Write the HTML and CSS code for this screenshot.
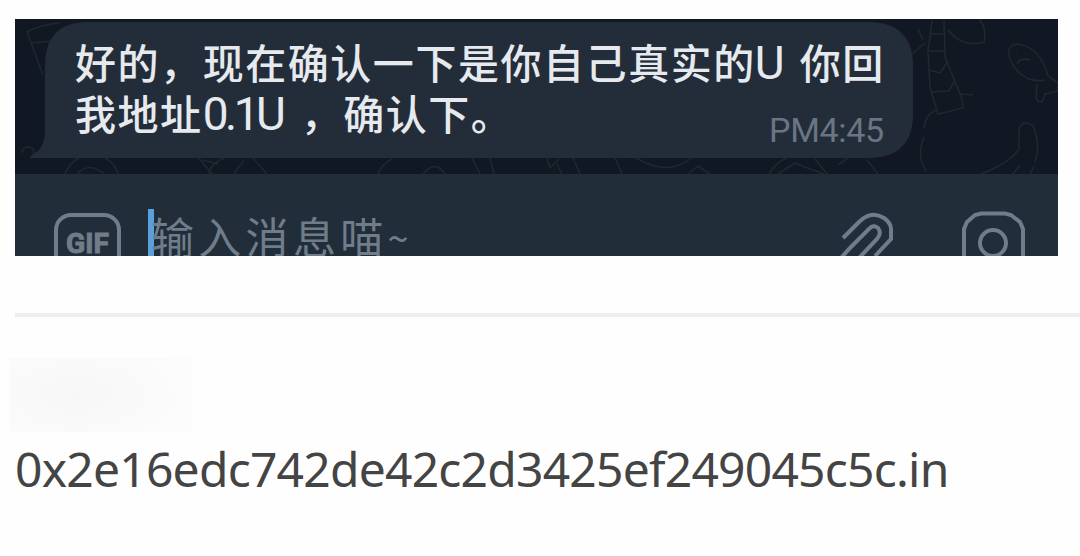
FILE: index.html
```
<!DOCTYPE html>
<html lang="zh-CN">
<head>
  <meta charset="UTF-8">
  <meta name="viewport" content="width=device-width, initial-scale=1.0">
  <title>Chat</title>
  <link rel="stylesheet" href="styles.css">
</head>
<body>
  <div class="chat">
    <div class="messages">
      <!-- wallpaper doodles and the bubble shape -->
      <svg class="wallpaper" width="1043" height="155" viewBox="15 19 1043 155">
        <g class="doodles">
          <path d="M43 75 L27 32 Q42 24 60 23 M31 43 L54 41 M22 153 a6 6 0 1 1 9 5"/>
          <path d="M65 174 Q70 162 79 158 M77 174 Q90 161 104 174 M105 158 Q116 164 118 174 M198 157 L212 174 M203 160 L218 164 M224 158 Q210 164 209 174 M234 174 L244 160 M253 158 L267 174"/>
          <path d="M378 174 Q382 164 392 159 M423 174 Q435 159 445 174 M472 158 L480 174 M490 158 L494 174 M547 158 L550 168 L559 159 M557 164 L562 174 M573 158 L580 174 M615 158 L622 174 M636 158 Q668 177 691 158 M688 174 L698 166 L710 174"/>
          <path d="M769 174 Q776 162 787 158 M778 174 L795 163 L805 167 L824 174 M815 159 L827 174 M838 165 L848 158 M867 160 L878 174"/>
          <path d="M932 21 L928 51 L930 87 L938 114 L963 108 L962 99 L945 57 L944 21 M931 34 H943 M929 51 H945 M929 70 L940 73 L948 61 M931 92 L949 91 L954 82 M961 94 L973 95 M912 54 L925 43 M918 29 L923 40 M948 30 Q962 48 984 42 Q987 30 980 20"/>
          <path d="M1045 80 Q1024 84 1011 62 Q1004 45 1018 44 Q1040 47 1048 76 L1058 83 L1058 91 L1045 94 Q1042 108 1036 98 L1037 84 M1017 64 Q1020 57 1030 60 M1016 51 h1"/>
          <path d="M936 110 Q925 115 924 128 M924 137 Q918 152 922 162 L926 172 M981 174 Q1010 163 1019 149 V130 Q1022 118 1033 126 Q1041 145 1035 162 M1013 174 L1020 165 M1030 174 L1034 166"/>
        </g>
        <path class="bubble" d="M88 22 H868 Q913 22 913 66 V114 Q913 158 868 158 H34 Q28 158 32 155 Q45 149 45 130 V66 Q45 22 88 22 Z"/>
      </svg>
      <div class="message">
        <p>好的，现在确认一下是你自己真实的<span class="unit">U</span>你回</p>
        <p>我地址<span class="amount">0.1U</span>，确认下。</p>
        <time>PM4:45</time>
      </div>
    </div>

    <div class="composer">
      <svg class="gif" width="70" height="60" viewBox="0 0 70 60">
        <rect x="2" y="2" width="63" height="64" rx="15"/>
        <text x="12" y="40" textLength="43" lengthAdjust="spacingAndGlyphs">GIF</text>
      </svg>
      <span class="cursor"></span>
      <span class="placeholder">输入消息喵<span class="tilde">~</span></span>
      <svg class="clip" width="58" height="50" viewBox="0 0 58 50">
        <path d="M3 26 L19 10 Q31 -2 44 6 Q51 11 51 17 V27 L35 44 M1 46 L10 36 L29 17 Q33 12 38 16 Q42 21 37 27 L19 46"/>
      </svg>
      <svg class="camera" width="66" height="50" viewBox="0 0 66 50">
        <path d="M3 60 V18 L6 11 L14 4 L20 2.5 H44 L50 4 L59 11 L62 18 V60"/>
        <circle cx="32" cy="32" r="13"/>
      </svg>
    </div>
  </div>

  <hr>

  <div class="hidden-name"></div>
  <p class="address">0x2e16edc742de42c2d3425ef249045c5c.in</p>
</body>
</html>
```

FILE: styles.css
```
body {
  margin: 0;
  padding-top: 19px;
  height: 537px;
  overflow: hidden;
  background-color: #fefefe;
  font-family: "Noto Sans", "Noto Sans CJK SC", sans-serif;
}

.chat {
  width: 1043px;
  height: 237px;
  margin-left: 15px;
  overflow: hidden;
  background-color: #222d3a;
}

.messages {
  position: relative;
  height: 155px;
  background-color: #111823;
}

.wallpaper {
  position: absolute;
  top: 0;
  left: 0;
}

.doodles {
  fill: none;
  stroke: #20272f;
  stroke-width: 1.6;
}

.bubble {
  fill: #232d39;
}

.message {
  position: relative;
  padding: 18px 0 0 60px;
  color: #e6eaee;
  font-family: "Noto Sans CJK SC", sans-serif;
  font-size: 41px;
  font-weight: 500;
  letter-spacing: 1.55px;
}

.message p {
  margin: 0;
  height: 51px;
  line-height: 49px;
  white-space: nowrap;
}

.unit,
.amount {
  display: inline-block;
  font-family: Roboto, sans-serif;
  font-size: 46px;
  font-weight: 400;
  line-height: 40px;
}

.unit {
  width: 44px;
  text-indent: -1px;
}

.amount {
  width: 98px;
  letter-spacing: -3.5px;
}

.message time {
  position: absolute;
  top: 91px;
  left: 754px;
  color: #697582;
  font-family: Roboto, sans-serif;
  font-size: 34px;
  font-weight: 400;
  line-height: 40px;
  letter-spacing: -0.3px;
}

.composer {
  display: flex;
  align-items: flex-start;
  height: 82px;
  color: #6f7c89;
}

.composer svg {
  flex: none;
  fill: none;
  stroke: #6f7c89;
  stroke-width: 4;
}

.gif {
  margin: 39px 0 0 39px;
}

.composer .gif text {
  fill: #6f7c89;
  stroke-width: 1;
  font: bold 28px Roboto, sans-serif;
}

.cursor {
  flex: none;
  width: 6px;
  height: 50px;
  margin: 35px 0 0 24px;
  background-color: #5b9fdb;
}

.placeholder {
  width: 685px;
  margin-top: 30px;
  margin-left: -3px;
  font-family: "Noto Sans CJK SC", sans-serif;
  font-size: 43px;
  font-weight: 400;
  line-height: 62px;
  letter-spacing: 4.3px;
  white-space: nowrap;
}

.tilde {
  position: relative;
  top: -1px;
  font-size: 38px;
}

.clip {
  margin: 38px 0 0 4px;
}

.camera {
  margin: 37px 0 0 63px;
}

hr {
  height: 4px;
  margin: 57px 0 0 15px;
  border: none;
  background-color: #eeeeee;
}

.hidden-name {
  width: 183px;
  height: 74px;
  margin: 41px 0 0 9px;
  background: radial-gradient(ellipse 120px 60px at 68px 37px, #f7f7f7, #fcfcfc);
}

.address {
  margin: 4px 0 0 15px;
  color: #444;
  font-size: 48px;
  line-height: 66px;
  letter-spacing: -0.78px;
  white-space: nowrap;
}
```
